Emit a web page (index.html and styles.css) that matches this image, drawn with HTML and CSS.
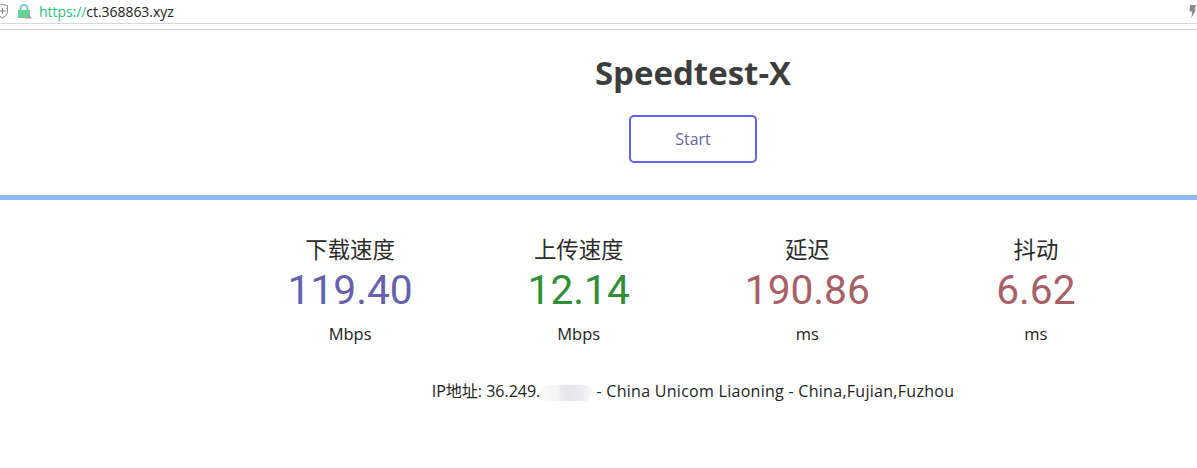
FILE: index.html
```html
<!DOCTYPE html>
<html lang="en">
<head>
  <meta charset="UTF-8">
  <title>Speedtest-X</title>
  <link rel="stylesheet" href="styles.css">
</head>
<body>

  <div class="addressbar">
    <svg class="shield" width="11" height="15" viewBox="0 0 11 15">
      <path d="M0.5 1.5 L5.5 0.5 L10.5 1.5 V8.5 Q10 12 5.5 14 Q1 12 0.5 8.5 Z" fill="#fff" stroke="#8a8a8a"/>
      <path d="M5.5 4 V10 M2.5 7 H8.5" stroke="#777" fill="none"/>
    </svg>
    <svg class="lock" width="15" height="15" viewBox="0 0 15 15">
      <path d="M3.5 7 V4.5 A3.5 3.5 0 0 1 10.5 4.5 V7" fill="none" stroke="#7cc3de" stroke-width="2"/>
      <rect x="1" y="6" width="12" height="8" fill="#62d695"/>
      <path d="M11.5 9.5 L14.8 14.5 H8.2 Z" fill="#a0a0a0"/>
    </svg>
    <span class="url"><span class="scheme">https://</span>ct.368863.xyz</span>
    <svg class="bolt" width="7" height="13" viewBox="0 0 7 13">
      <path d="M1 0 H7 L5.5 4.5 H7 L2.5 13 L3 6.5 H0.5 Z" fill="#8c8c8c"/>
    </svg>
  </div>
  <div class="toolbar"></div>

  <div class="page">
    <h1>Speedtest-X</h1>
    <button class="start">Start</button>
  </div>

  <div class="divider"></div>

  <div class="page">
    <div class="stats">
      <div class="stat">
        <div class="name">下载速度</div>
        <div class="value blue">119.40</div>
        <div class="unit">Mbps</div>
      </div>
      <div class="stat">
        <div class="name">上传速度</div>
        <div class="value green">12.14</div>
        <div class="unit">Mbps</div>
      </div>
      <div class="stat">
        <div class="name">延迟</div>
        <div class="value red">190.86</div>
        <div class="unit">ms</div>
      </div>
      <div class="stat">
        <div class="name">抖动</div>
        <div class="value red">6.62</div>
        <div class="unit">ms</div>
      </div>
    </div>
    <p class="ip">IP地址: 36.249.<span class="blur"></span> <span class="isp">- China Unicom Liaoning - China,Fujian,Fuzhou</span></p>
  </div>

</body>
</html>
```

FILE: styles.css
```css
body {
  font-family: "Open Sans", "Noto Sans CJK SC", sans-serif;
  background-color: #fff;
  color: #222;
  margin: 0;
  padding: 0;
  overflow: hidden;
}

.addressbar {
  height: 23px;
  display: flex;
  align-items: center;
  padding-right: 1px;
  border-bottom: 1px solid #d8d8d8;
  overflow: hidden;
}

.shield {
  margin-left: -3px;
}

.lock {
  margin-left: 9px;
}

.url {
  margin-left: 7px;
  font-size: 14px;
  color: #222;
  letter-spacing: -0.05px;
}

.scheme {
  color: #1fc47d;
}

.bolt {
  margin-left: auto;
}

.toolbar {
  height: 5px;
  border-bottom: 1px solid #d0d0d0;
}

.page {
  padding-left: 189px;
}

h1 {
  margin: 0;
  padding-top: 20px;
  text-align: center;
  font-size: 33px;
  line-height: 46px;
  font-weight: 700;
  color: #3d3d3d;
}

.start {
  display: block;
  width: 128px;
  height: 48px;
  margin: 19px auto 32px;
  background-color: #fff;
  border: 2px solid #6262f5;
  border-radius: 5px;
  font-family: inherit;
  font-size: 16px;
  color: #6a64a8;
}

.divider {
  height: 5px;
  background-color: #90b8fa;
}

.stats {
  display: grid;
  grid-template-columns: repeat(4, 228.6px);
  justify-content: center;
  padding-top: 36px;
  text-align: center;
}

.name {
  font-size: 22.4px;
  line-height: 28px;
  color: #2b2b2b;
}

.value {
  font-family: Roboto, sans-serif;
  font-size: 40.7px;
  line-height: 50px;
  margin-top: 1px;
}

.blue {
  color: #6561ae;
}

.green {
  color: #2f8f36;
}

.red {
  color: #a85f66;
}

.unit {
  font-size: 16.5px;
  line-height: 22px;
  margin-top: 8px;
}

.ip {
  margin: 35px 0 0;
  text-align: center;
  font-size: 16px;
  line-height: 22px;
}

.isp {
  letter-spacing: 0.28px;
}

.blur {
  display: inline-block;
  width: 52px;
  height: 16px;
  vertical-align: -4px;
  border-radius: 8px;
  background: linear-gradient(90deg, #fafafa 0, #f5f5f5 30%, #e6e6ea 50%, #e9e9ec 75%, #f9f9f9 100%);
}
```
